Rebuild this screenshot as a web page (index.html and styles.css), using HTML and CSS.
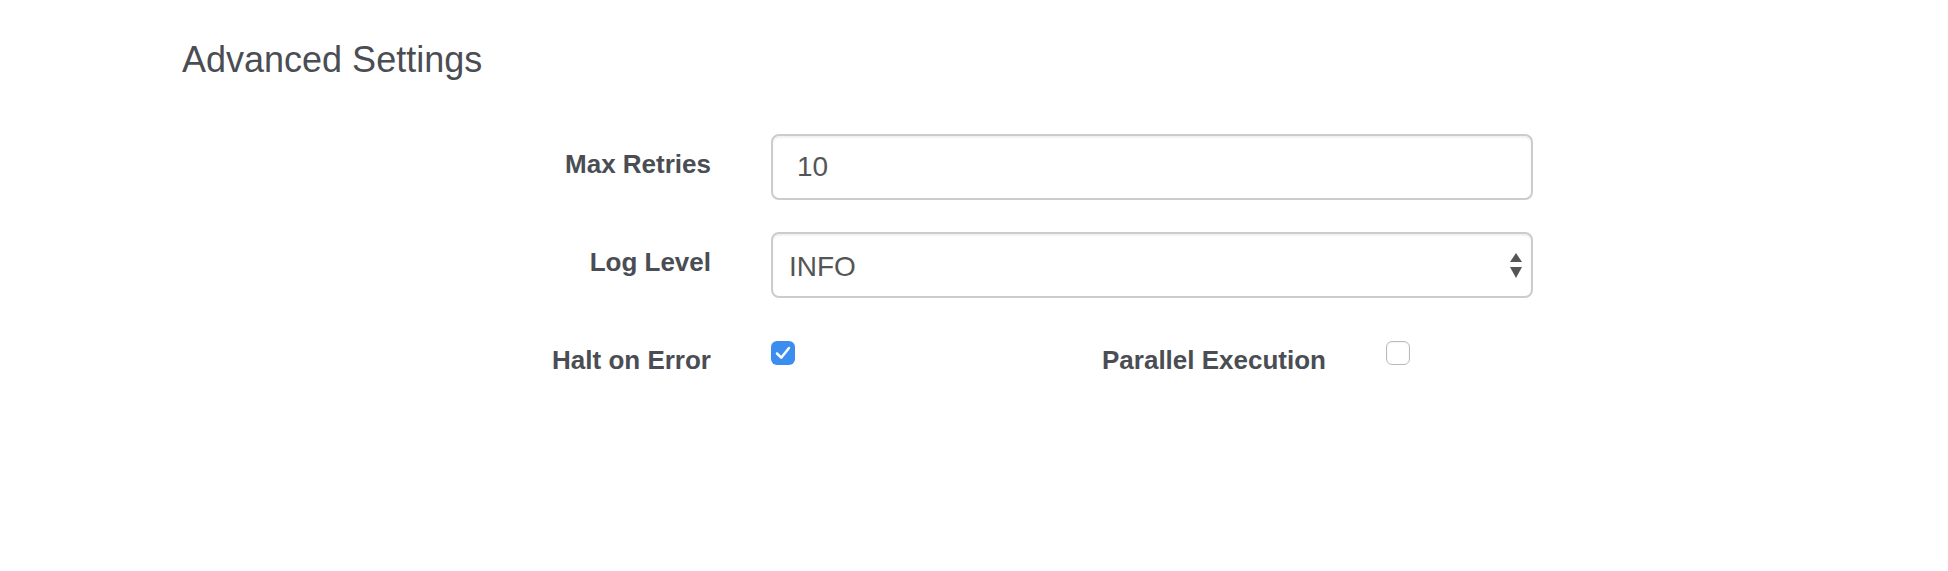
FILE: index.html
```html
<!DOCTYPE html>
<html lang="en">
<head>
<meta charset="utf-8">
<title>Advanced Settings</title>
<link rel="stylesheet" href="styles.css">
</head>
<body>
<div class="page">
  <h2 class="section-title">Advanced Settings</h2>
  <form class="form">
    <div class="form-row">
      <label class="form-label" for="retries">Max Retries</label>
      <div class="form-control-cell">
        <input id="retries" class="text-input" type="text" value="10">
      </div>
    </div>
    <div class="form-row">
      <label class="form-label" for="level">Log Level</label>
      <div class="form-control-cell">
        <div class="select-wrap">
          <select id="level" class="select-input">
            <option>INFO</option>
            <option>DEBUG</option>
            <option>WARN</option>
            <option>ERROR</option>
          </select>
          <svg class="select-arrows" width="12" height="26" viewBox="0 0 12 26">
            <polygon points="6,0 12,9 0,9" fill="#555"/>
            <polygon points="0,14 12,14 6,25" fill="#555"/>
          </svg>
        </div>
      </div>
    </div>
    <div class="form-row split">
      <span class="form-label">Halt on Error</span>
      <div class="check-cell">
        <span class="check checked">
          <svg width="18" height="16" viewBox="0 0 18 16"><path d="M3 8.5 L7.2 12.7 L15 3" fill="none" stroke="#fff" stroke-width="2.5" stroke-linecap="round" stroke-linejoin="round"/></svg>
        </span>
      </div>
      <span class="form-label">Parallel Execution</span>
      <div class="check-cell">
        <span class="check"></span>
      </div>
    </div>
  </form>
</div>
</body>
</html>
```

FILE: styles.css
```css
html, body {
  margin: 0;
  padding: 0;
  background: #ffffff;
}

body {
  font-family: "Liberation Sans", Arial, Helvetica, sans-serif;
  color: #4a4d53;
}

.page {
  padding-top: 40px;
}

.section-title {
  margin: 0 0 54px 182px;
  font-size: 36px;
  line-height: 40px;
  font-weight: 400;
  color: #4a4d53;
}

.form {
  margin-left: 333px;
  width: 1230px;
}

.form-row {
  display: grid;
  grid-template-columns: 408px 822px;
  margin-bottom: 32px;
}

.form-row.split {
  grid-template-columns: 408px 207px 408px 207px;
}

.form-label {
  display: block;
  box-sizing: border-box;
  padding: 12px 30px 0 0;
  text-align: right;
  font-size: 26px;
  line-height: 37px;
  font-weight: 700;
  color: #4a4d53;
}

.form-control-cell {
  padding: 0 30px;
}

.text-input,
.select-input {
  display: block;
  box-sizing: border-box;
  width: 100%;
  height: 66px;
  margin: 0;
  border: 2px solid #cccccc;
  border-radius: 8px;
  background: #ffffff;
  box-shadow: inset 0 2px 2px rgba(0, 0, 0, 0.06);
  font-family: "Liberation Sans", Arial, Helvetica, sans-serif;
  font-size: 28px;
  color: #555555;
  outline: none;
}

.text-input {
  padding: 0 24px;
}

.select-wrap {
  position: relative;
}

.select-input {
  appearance: none;
  -webkit-appearance: none;
  padding: 3px 40px 0 16px;
}

.select-arrows {
  position: absolute;
  right: 11px;
  top: 21px;
  pointer-events: none;
}

.check-cell {
  padding: 11px 0 0 30px;
}

.check {
  display: flex;
  align-items: center;
  justify-content: center;
  box-sizing: border-box;
  width: 24px;
  height: 24px;
  border: 1.5px solid #b9b9b9;
  border-radius: 6px;
  background: #ffffff;
  box-shadow: inset 0 1px 2px rgba(0, 0, 0, 0.05);
}

.check.checked {
  border: none;
  background: #3b8ef0;
  box-shadow: none;
}
```
